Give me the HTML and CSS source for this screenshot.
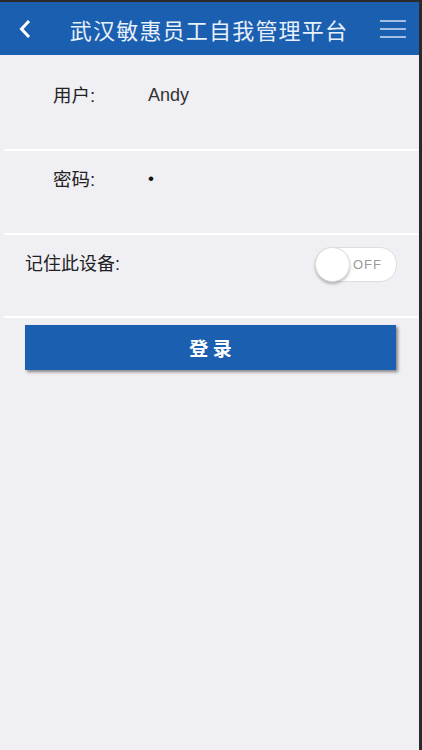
FILE: index.html
```html
<!DOCTYPE html>
<html>
  <head>
    <title>武汉敏惠员工自我管理平台</title>
    <meta charset="utf-8" />
    <link rel="stylesheet" href="styles.css">
  </head>
  <body>
    <div class="screen">
      <div class="header">
        <a class="back">
          <svg width="12" height="20" viewBox="0 0 12 20"><path d="M10 2 L2.5 10 L10 18" fill="none" stroke="#fff" stroke-width="3"/></svg>
        </a>
        <h1>武汉敏惠员工自我管理平台</h1>
        <a class="menu">
          <svg width="26" height="18" viewBox="0 0 26 18"><path d="M0 1 H26 M0 9 H26 M0 17 H26" stroke="#cfe0f5" stroke-width="1.6"/></svg>
        </a>
      </div>
      <div class="form">
        <div class="row">
          <span class="label">用户:</span>
          <span class="value">Andy</span>
        </div>
        <div class="row">
          <span class="label">密码:</span>
          <span class="value dot">•</span>
        </div>
        <div class="row remember">
          <span>记住此设备:</span>
          <div class="switch">
            <span class="knob"></span>
            <span class="off">OFF</span>
          </div>
        </div>
      </div>
      <div class="actions">
        <input type="button" class="login" value="登 录">
      </div>
    </div>
  </body>
</html>
```

FILE: styles.css
```css
html, body {
  margin: 0;
  height: 100%;
}
body {
  background: #efeff4;
  font-family: "Liberation Sans", "Noto Sans CJK SC", sans-serif;
  color: #222;
}
.screen {
  box-sizing: border-box;
  min-height: 100%;
  border-top: 2px solid #2a2a2a;
  border-right: 3px solid #2a2a2a;
}
.header {
  height: 53px;
  background: #1b5fb0;
  display: flex;
  align-items: center;
  color: #fff;
}
.header .back {
  width: 50px;
  display: flex;
  justify-content: center;
}
.header h1 {
  flex: 1;
  margin: 0;
  font-size: 22px;
  font-weight: normal;
  text-align: center;
  letter-spacing: 1.2px;
  color: #e8f0fa;
}
.header .menu {
  width: 50px;
  display: flex;
  justify-content: center;
  padding-right: 1px;
}
.form {
  padding: 12px 1px 0 4px;
}
.row {
  box-sizing: border-box;
  display: flex;
  align-items: flex-start;
  padding-top: 14px;
  border-bottom: 2px solid #fff;
  font-size: 18px;
}
.row:nth-child(1) {
  height: 84px;
}
.row:nth-child(2) {
  height: 84px;
}
.row .label {
  width: 95px;
  padding-left: 49px;
  box-sizing: border-box;
  font-size: 18.5px;
}
.row .value {
  padding-left: 49px;
  padding-top: 4px;
  color: #333;
}
.row .dot {
  font-size: 17px;
  padding-top: 4px;
  color: #111;
}
.remember {
  height: 83px;
  justify-content: space-between;
  padding: 12px 21px 0 21px;
}
.remember > span {
  padding-top: 2px;
}
.switch {
  position: relative;
  width: 80px;
  height: 33px;
  border: 1px solid #ddd;
  border-radius: 17px;
  background: #fff;
}
.switch .knob {
  position: absolute;
  left: -1px;
  top: -1px;
  width: 33px;
  height: 33px;
  border-radius: 50%;
  background: #fff;
  border: 1px solid #ddd;
  box-shadow: 0 2px 3px rgba(0, 0, 0, 0.25);
}
.switch .off {
  position: absolute;
  left: 37px;
  top: 9px;
  font-size: 13px;
  color: #999;
  letter-spacing: 1px;
}
.actions {
  padding: 7px 0 0 25px;
}
.login {
  width: 371px;
  height: 45px;
  border: none;
  background: #1b5fb0;
  color: #fff;
  font-family: "Noto Sans CJK SC", sans-serif;
  font-size: 19px;
  font-weight: bold;
  box-shadow: 2px 2px 3px rgba(0, 0, 0, 0.45);
}
```
